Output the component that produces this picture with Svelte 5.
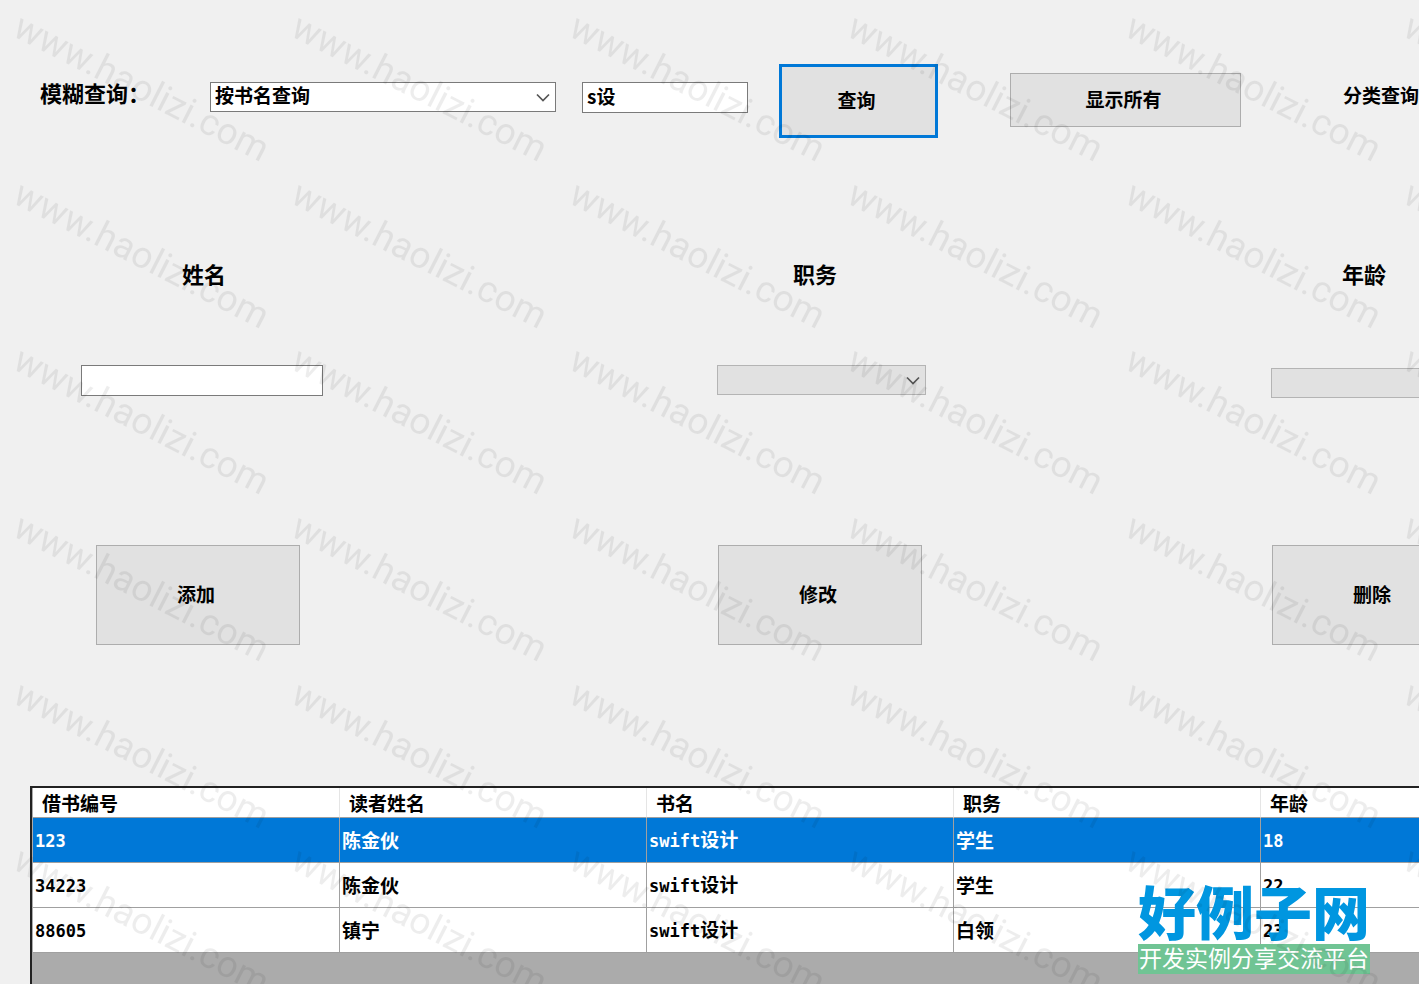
<script>
  let field = $state('按书名查询');
  let keyword = $state('s设');
  let name = $state('');
  let selected = $state(0);

  const headers = ['借书编号', '读者姓名', '书名', '职务', '年龄'];
  const rows = [
    ['123', '陈金伙', 'swift设计', '学生', '18'],
    ['34223', '陈金伙', 'swift设计', '学生', '22'],
    ['88605', '镇宁', 'swift设计', '白领', '23'],
  ];
  const actions = ['添加', '修改', '删除'];

  // Splits a cell into runs so that digits and Latin letters get a fixed-width face.
  const runs = (text) =>
    (text.match(/[\da-z]+|[^\da-z]+/g) ?? []).map((part) => ({
      part,
      mono: /[\da-z]/.test(part),
    }));
</script>

{#snippet chevron()}
  <svg class="chevron" viewBox="0 0 14 9" aria-hidden="true">
    <path d="M1 1.5 7 7.5 13 1.5" fill="none" stroke="currentColor" stroke-width="1.7" />
  </svg>
{/snippet}

<div class="page">
  <form class="search" onsubmit={(e) => e.preventDefault()}>
    <label class="caption" for="field">模糊查询：</label>
    <div class="lift">
      <div class="combo">
        <select id="field" bind:value={field}>
          <option>按书名查询</option>
          <option>按姓名查询</option>
        </select>
        {@render chevron()}
      </div>
    </div>
    <div class="lift keyword">
      <input aria-label="关键字" bind:value={keyword} />
    </div>
    <button class="primary">查询</button>
    <button class="all" type="button">显示所有</button>
    <span class="category">分类查询：</span>
  </form>

  <div class="row captions">
    <label class="caption" for="name">姓名</label>
    <label class="caption" for="job">职务</label>
    <label class="caption" for="age">年龄</label>
  </div>

  <div class="row fields">
    <input id="name" class="name" bind:value={name} />
    <div class="combo job">
      <select id="job" disabled></select>
      {@render chevron()}
    </div>
    <div class="combo age">
      <select id="age" disabled></select>
    </div>
  </div>

  <div class="row actions">
    {#each actions as action}
      <button type="button">{action}</button>
    {/each}
  </div>

  <div class="records">
    <table>
      <thead>
        <tr>
          {#each headers as header}<th>{header}</th>{/each}
        </tr>
      </thead>
      <tbody>
        {#each rows as row, i}
          <tr class:selected={i === selected} onclick={() => (selected = i)}>
            {#each row as cell}
              <td>{#each runs(cell) as run}<span class:mono={run.mono}>{run.part}</span>{/each}</td>
            {/each}
          </tr>
        {/each}
      </tbody>
    </table>
  </div>

  <div class="brand">
    <strong>好例子网</strong>
    <span>开发实例分享交流平台</span>
  </div>

  <svg class="watermark" aria-hidden="true">
    <defs>
      <pattern id="site" width="278" height="500" patternUnits="userSpaceOnUse">
        {#each [0, 167, 333] as y}
          <text transform="translate(11 {y + 35}) rotate(27)">www.haolizi.com</text>
        {/each}
      </pattern>
    </defs>
    <rect width="100%" height="100%" fill="url(#site)" />
  </svg>
</div>

<style>
  :global(body) {
    margin: 0;
    background: #f0f0f0;
  }

  .page {
    position: relative;
    display: flex;
    flex-direction: column;
    box-sizing: border-box;
    min-height: 100vh;
    padding-top: 64px;
    overflow: hidden;
    color: #000;
    font: bold 19px/24px 'Noto Sans CJK SC', sans-serif;
  }

  .page * {
    box-sizing: border-box;
  }

  .caption {
    font-size: 22px;
    line-height: 30px;
    white-space: nowrap;
  }

  input,
  select,
  button {
    margin: 0;
    border-radius: 0;
    color: inherit;
    font: inherit;
  }

  input,
  select {
    display: block;
    width: 100%;
    height: 30px;
    padding: 0 4px 4px;
    border: 1px solid #7a7a7a;
    outline: 0;
    background: #fff;
    appearance: none;
  }

  input {
    height: 31px;
  }

  select:disabled {
    border-color: #b4b4b4;
    background: #e1e1e1;
    opacity: 1;
  }

  button {
    padding: 0 4px 2px 0;
    border: 1px solid #adadad;
    background: #e1e1e1;
  }

  .combo {
    position: relative;
  }

  .chevron {
    position: absolute;
    top: 11px;
    right: 6px;
    width: 14px;
    height: 9px;
    color: #555;
    pointer-events: none;
  }

  .search {
    display: grid;
    grid-template-columns:
      minmax(0, 170fr) minmax(0, 346fr) minmax(0, 192fr) minmax(0, 190fr)
      minmax(0, 303fr) minmax(0, 178fr);
    align-items: center;
    padding-left: 40px;
  }

  .search .caption {
    padding-bottom: 18px;
  }

  .lift {
    padding-bottom: 8px;
  }

  .keyword {
    padding-left: 26px;
  }

  .primary {
    height: 74px;
    margin-left: 31px;
    border: 3px solid #0078d7;
  }

  .all {
    height: 54px;
    margin-bottom: 2px;
    margin-left: 72px;
  }

  .category {
    padding-bottom: 12px;
    padding-left: 102px;
    white-space: nowrap;
  }

  .row {
    display: grid;
  }

  .captions {
    grid-template-columns: minmax(0, 611fr) minmax(0, 549fr) minmax(0, 77fr);
    margin-top: 120px;
    padding-left: 182px;
  }

  .fields {
    grid-template-columns: minmax(0, 636fr) minmax(0, 554fr) minmax(0, 148fr);
    margin-top: 77px;
    padding-left: 81px;
  }

  .name {
    width: 242px;
  }

  .job {
    width: 209px;
  }

  .age {
    margin-top: 3px;
  }

  .age select {
    border-right: 0;
  }

  .actions {
    grid-template-columns: minmax(0, 622fr) minmax(0, 554fr) minmax(0, 147fr);
    margin-top: 147px;
    padding-left: 96px;
  }

  .actions button {
    width: 204px;
    height: 100px;
  }

  .records {
    flex: 1;
    min-height: 198px;
    margin-top: 141px;
    margin-left: 30px;
    padding-left: 1px;
    overflow: hidden;
    border-top: 2px solid #222;
    border-left: 2px solid #222;
    background: #ababab;
  }

  /* The last column runs past the right edge of the window. */
  table {
    width: calc(100% + 149px);
    border-collapse: separate;
    border-spacing: 0;
    table-layout: fixed;
    background: #fff;
  }

  th,
  td {
    padding: 0 2px;
    border-right: 1px solid #a0a0a0;
    border-bottom: 1px solid #a0a0a0;
    text-align: left;
    white-space: nowrap;
  }

  th {
    height: 30px;
    padding-left: 9px;
    border-right-color: #e5e5e5;
  }

  td {
    height: 45px;
  }

  .selected td {
    background: #0078d7;
    color: #fff;
  }

  .mono {
    font-family: 'DejaVu Sans Mono', monospace;
    font-size: 17px;
  }

  .brand {
    position: absolute;
    right: 49px;
    bottom: 10px;
    width: 232px;
    white-space: nowrap;
  }

  .brand strong {
    display: block;
    padding-bottom: 3px;
    color: #0096e0;
    font-size: 58px;
    font-weight: 900;
    line-height: 62px;
  }

  .brand span {
    display: block;
    padding: 0 0 3px 1px;
    background: #70c494;
    color: #fff;
    font-size: 23px;
    font-weight: 400;
    line-height: 27px;
  }

  .watermark {
    position: absolute;
    inset: 0;
    width: 100%;
    height: 100%;
    pointer-events: none;
  }

  .watermark text {
    fill: #000;
    fill-opacity: 0.07;
    font: 400 37px Roboto, sans-serif;
  }
</style>
